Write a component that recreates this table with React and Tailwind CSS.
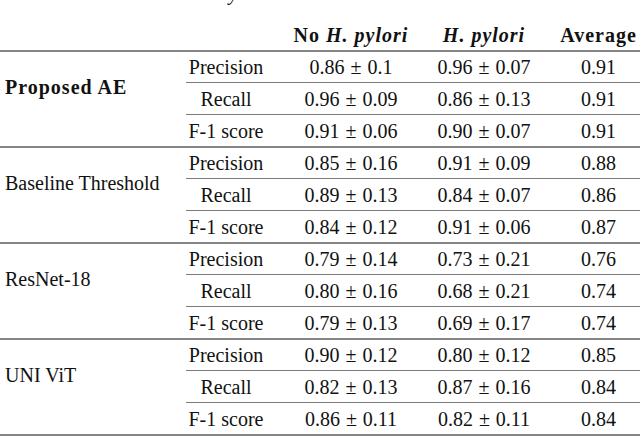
import React from "react";

const groups = [
  {
    name: "Proposed AE",
    bold: true,
    rows: [
      ["Precision", "0.86", "0.1", "0.96", "0.07", "0.91"],
      ["Recall", "0.96", "0.09", "0.86", "0.13", "0.91"],
      ["F-1 score", "0.91", "0.06", "0.90", "0.07", "0.91"],
    ],
  },
  {
    name: "Baseline Threshold",
    rows: [
      ["Precision", "0.85", "0.16", "0.91", "0.09", "0.88"],
      ["Recall", "0.89", "0.13", "0.84", "0.07", "0.86"],
      ["F-1 score", "0.84", "0.12", "0.91", "0.06", "0.87"],
    ],
  },
  {
    name: "ResNet-18",
    rows: [
      ["Precision", "0.79", "0.14", "0.73", "0.21", "0.76"],
      ["Recall", "0.80", "0.16", "0.68", "0.21", "0.74"],
      ["F-1 score", "0.79", "0.13", "0.69", "0.17", "0.74"],
    ],
  },
  {
    name: "UNI ViT",
    rows: [
      ["Precision", "0.90", "0.12", "0.80", "0.12", "0.85"],
      ["Recall", "0.82", "0.13", "0.87", "0.16", "0.84"],
      ["F-1 score", "0.86", "0.11", "0.82", "0.11", "0.84"],
    ],
  },
];

function PM({ a, b }) {
  return (
    <span className="whitespace-nowrap">
      {a}
      <span className="mx-[6px]">±</span>
      {b}
    </span>
  );
}

export default function App() {
  return (
    <div
      className="w-[640px] h-[436px] overflow-hidden bg-white text-[#111] text-[20px]"
      style={{ fontFamily: '"Liberation Serif", serif' }}
    >
      <div className="h-[50px] flex flex-col border-b-2 border-[#858585] box-content">
        <div className="h-[6px] overflow-hidden">
          <div className="mt-[-17px] pl-[229px] leading-[20px] italic">y</div>
        </div>
        <div className="flex-1 flex items-end pb-[5px]">
          <div className="w-[186px] shrink-0" />
          <div className="grid grid-cols-[80px_170px_96px_133px] font-bold tracking-[1px] leading-[20px]">
            <div />
            <div className="text-center whitespace-nowrap">
              No <span className="italic">H. pylori</span>
            </div>
            <div className="text-center whitespace-nowrap italic">H. pylori</div>
            <div className="text-center">Average</div>
          </div>
        </div>
      </div>
      {groups.map((g) => (
        <div key={g.name} className="flex h-[96px] border-b-2 border-[#858585]">
          <div
            className={
              "w-[186px] shrink-0 pl-[5px] pt-[25px] leading-[20px] whitespace-nowrap " +
              (g.bold ? "font-bold tracking-[1px]" : "")
            }
          >
            {g.name}
          </div>
          <div className="flex-1 flex flex-col">
            {g.rows.map((r, i) => (
              <div
                key={r[0]}
                className={
                  "grid grid-cols-[80px_170px_96px_133px] items-center leading-[20px] " +
                  (i === 0
                    ? "h-[31px] border-b border-[#7a7a7a]"
                    : i === 1
                    ? "h-[32px] border-b border-[#7a7a7a]"
                    : "flex-1")
                }
              >
                <div className="text-center whitespace-nowrap">{r[0]}</div>
                <div className="text-center">
                  <PM a={r[1]} b={r[2]} />
                </div>
                <div className="text-center">
                  <PM a={r[3]} b={r[4]} />
                </div>
                <div className="text-center">{r[5]}</div>
              </div>
            ))}
          </div>
        </div>
      ))}
    </div>
  );
}
